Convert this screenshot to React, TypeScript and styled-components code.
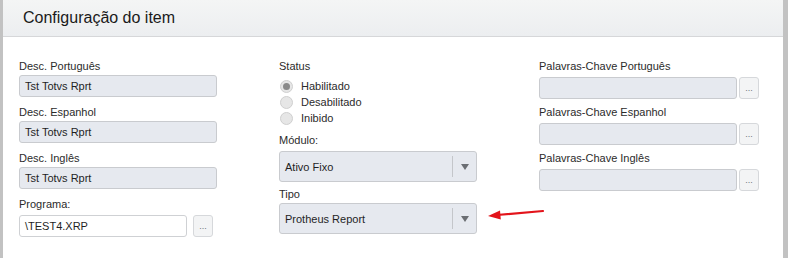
import React from 'react'
import styled, { createGlobalStyle } from 'styled-components'

const GlobalStyle = createGlobalStyle`
  html, body {
    margin: 0;
    padding: 0;
    background: #fff;
  }
  body {
    font-family: Arial, 'Liberation Sans', sans-serif;
  }
`

type FieldProps = {
  $top?: number
}

const Panel = styled.div`
  position: relative;
  height: 258px;
  box-sizing: border-box;
  border-left: 3px solid #c2c2c2;
  border-right: 5px solid #c2c2c2;
  background: #fff;
  overflow: hidden;
`

const Header = styled.div`
  height: 36px;
  display: flex;
  align-items: center;
  padding-left: 20px;
  border-bottom: 1px solid #d6d7d9;
  background: linear-gradient(#f4f5f5, #eceef0);
  font-size: 16px;
  color: #1a1a1a;
`

const Body = styled.div`
  display: grid;
  grid-template-columns: 198px 198px 220px;
  column-gap: 62px;
  padding: 22px 0 0 16px;
  align-items: start;
`

const Column = styled.div`
  display: flex;
  flex-direction: column;
`

const Label = styled.div<FieldProps>`
  font-size: 11px;
  line-height: 14px;
  color: #2b2b2b;
  margin-top: ${(p) => p.$top ?? 0}px;
`

const Row = styled.div<FieldProps>`
  display: flex;
  align-items: center;
  gap: ${(p) => p.$top ?? 2}px;
  margin-top: 2px;
`

const TextBox = styled.div<{ $width?: number; $white?: boolean }>`
  box-sizing: border-box;
  width: ${(p) => p.$width ?? 198}px;
  height: 22px;
  margin-top: 2px;
  padding: 0 5px;
  display: flex;
  align-items: center;
  font-size: 11px;
  color: #1f1f1f;
  background: ${(p) => (p.$white ? '#fff' : '#e6e9ef')};
  border: 1px solid ${(p) => (p.$white ? '#cfd1d4' : '#c9cbcf')};
  border-radius: 3px;
  white-space: nowrap;
`

const DotsButton = styled.div`
  box-sizing: border-box;
  width: 20px;
  height: 22px;
  margin-top: 2px;
  display: flex;
  align-items: flex-end;
  justify-content: center;
  padding-bottom: 5px;
  font-size: 9px;
  line-height: 9px;
  color: #6f7680;
  background: #f3f4f5;
  border: 1px solid #d6d8db;
  border-radius: 3px;
`

const RadioGroup = styled.div`
  display: flex;
  flex-direction: column;
  margin-top: 5px;
`

const RadioRow = styled.div`
  height: 16px;
  display: flex;
  align-items: center;
  gap: 8px;
  font-size: 11px;
  color: #2b2b2b;
`

const RadioCircle = styled.span<{ $checked?: boolean }>`
  box-sizing: border-box;
  width: 13px;
  height: 13px;
  margin-left: 1px;
  border-radius: 50%;
  border: 1px solid #cfcfcf;
  background: #e6e6e6;
  display: flex;
  align-items: center;
  justify-content: center;

  &::after {
    content: '';
    width: 7px;
    height: 7px;
    border-radius: 50%;
    background: ${(p) => (p.$checked ? '#8a8a8a' : 'transparent')};
  }
`

const Select = styled.div<FieldProps>`
  box-sizing: border-box;
  width: 198px;
  height: 31px;
  margin-top: ${(p) => p.$top ?? 2}px;
  display: flex;
  align-items: stretch;
  background: #e6e9ef;
  border: 1px solid #c9cbcf;
  border-radius: 3px;
  font-size: 11px;
  color: #1f1f1f;
`

const SelectValue = styled.div`
  flex: 1;
  display: flex;
  align-items: center;
  padding-left: 5px;
`

const SelectArrow = styled.div`
  width: 23px;
  margin: 4px 0;
  border-left: 1px solid #c4c6ca;
  display: flex;
  align-items: center;
  justify-content: center;

  &::after {
    content: '';
    border-left: 4px solid transparent;
    border-right: 4px solid transparent;
    border-top: 6px solid #6b6e73;
  }
`

const Pointer = styled.svg`
  position: absolute;
  left: 482px;
  top: 204px;
`

const statusOptions = [
  { label: 'Habilitado', checked: true },
  { label: 'Desabilitado', checked: false },
  { label: 'Inibido', checked: false },
]

const App: React.FC = () => {
  return (
    <>
      <GlobalStyle />
      <Panel>
        <Header>Configuração do item</Header>
        <Body>
          <Column>
            <Label>Desc. Português</Label>
            <TextBox>Tst Totvs Rprt</TextBox>
            <Label $top={8}>Desc. Espanhol</Label>
            <TextBox>Tst Totvs Rprt</TextBox>
            <Label $top={8}>Desc. Inglês</Label>
            <TextBox>Tst Totvs Rprt</TextBox>
            <Label $top={8}>Programa:</Label>
            <Row $top={6}>
              <TextBox $width={168} $white>
                \TEST4.XRP
              </TextBox>
              <DotsButton>...</DotsButton>
            </Row>
          </Column>

          <Column>
            <Label>Status</Label>
            <RadioGroup>
              {statusOptions.map((o) => (
                <RadioRow key={o.label}>
                  <RadioCircle $checked={o.checked} />
                  {o.label}
                </RadioRow>
              ))}
            </RadioGroup>
            <Label $top={7}>Módulo:</Label>
            <Select $top={4}>
              <SelectValue>Ativo Fixo</SelectValue>
              <SelectArrow />
            </Select>
            <Label $top={5}>Tipo</Label>
            <Select>
              <SelectValue>Protheus Report</SelectValue>
              <SelectArrow />
            </Select>
          </Column>

          <Column>
            <Label>Palavras-Chave Português</Label>
            <Row>
              <TextBox />
              <DotsButton>...</DotsButton>
            </Row>
            <Label $top={6}>Palavras-Chave Espanhol</Label>
            <Row>
              <TextBox />
              <DotsButton>...</DotsButton>
            </Row>
            <Label $top={6}>Palavras-Chave Inglês</Label>
            <Row>
              <TextBox />
              <DotsButton>...</DotsButton>
            </Row>
          </Column>
        </Body>

        <Pointer width="64" height="20" viewBox="0 0 64 20">
          <line x1="58" y1="7" x2="12" y2="11" stroke="#e3141b" strokeWidth="2.2" strokeLinecap="round" />
          <polygon points="3,12 15,6.5 15.8,15.5" fill="#e3141b" />
        </Pointer>
      </Panel>
    </>
  )
}

export default App
